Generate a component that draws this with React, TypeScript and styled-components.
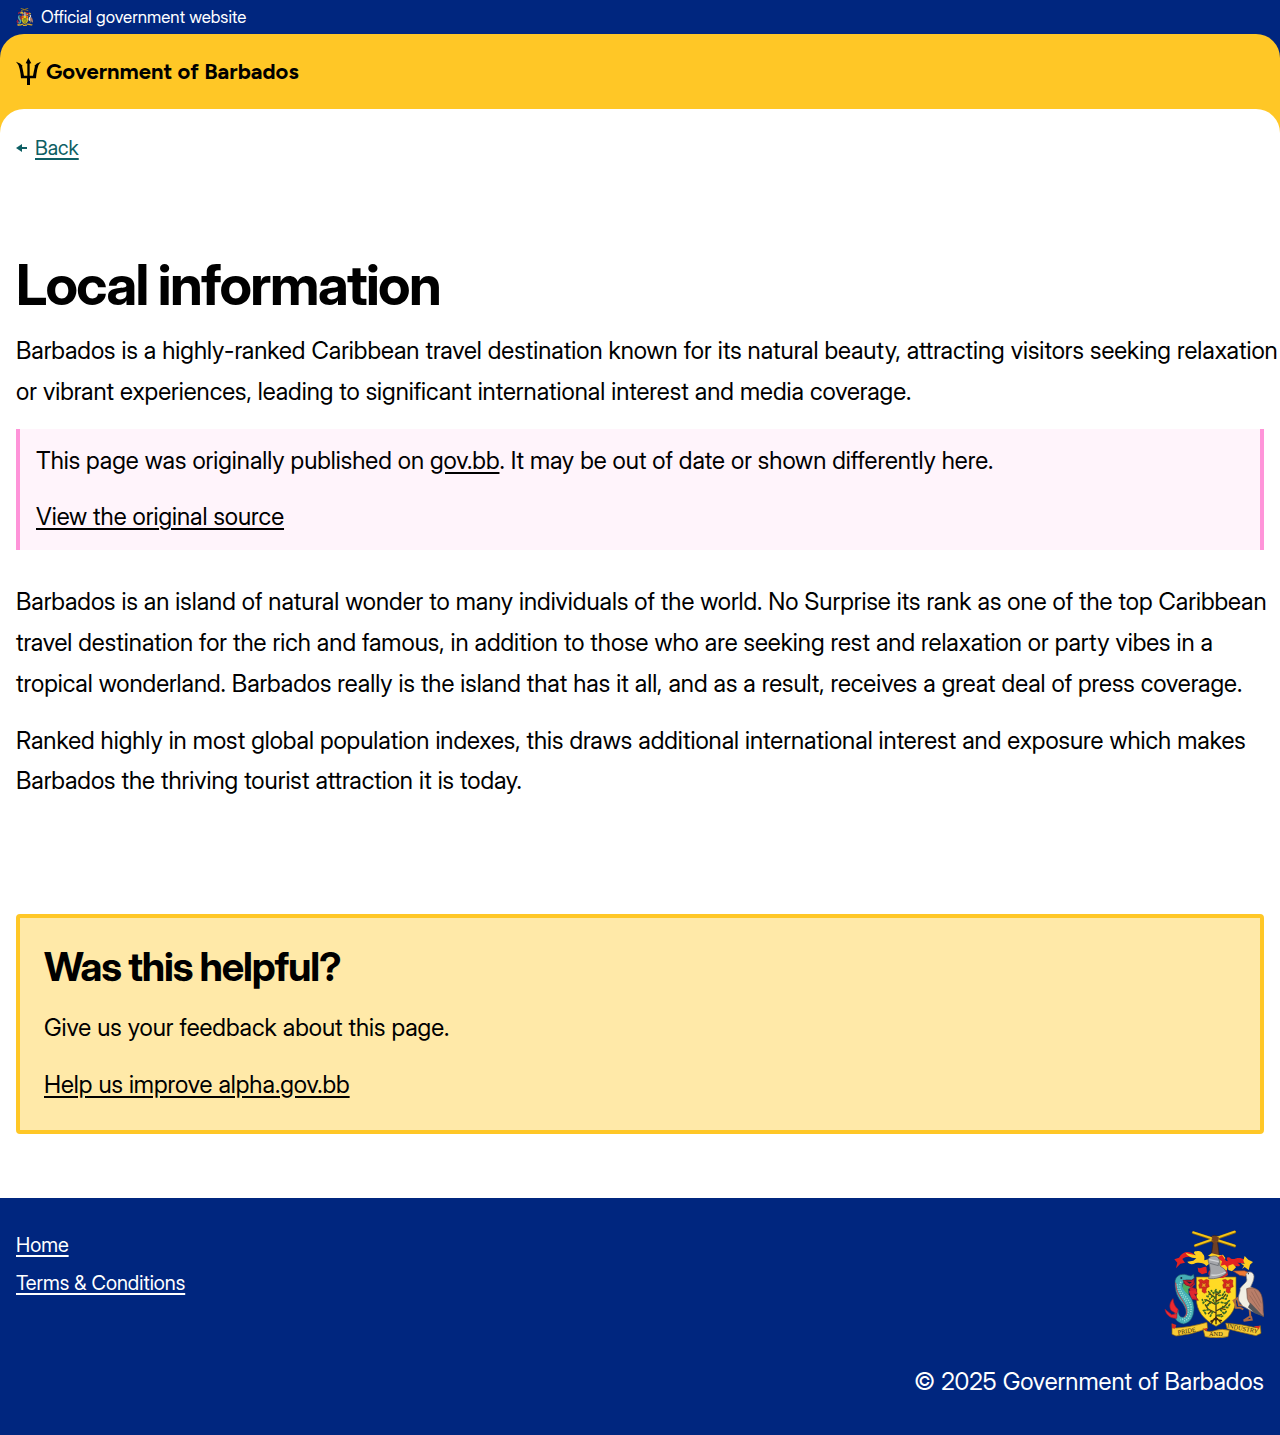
import React from "react";
import styled, { createGlobalStyle } from "styled-components";

const color = {
  blue: "#00267f",
  yellow: "#ffc726",
  paleYellow: "#ffe9a8",
  pink: "#ff94d9",
  palePink: "#fff4fb",
  teal: "#0e5f64",
};

const GlobalStyle = createGlobalStyle`
  *, *::before, *::after { box-sizing: border-box; }
  body {
    margin: 0;
    background: #fff;
    color: #000;
    font-family: "Inter Display", Inter, "Liberation Sans", sans-serif;
    font-size: 24px;
    line-height: 1.7;
  }
  h1, h2, p { margin: 0; }
`;

const OfficialBar = styled.div`
  display: flex;
  align-items: center;
  gap: 8px;
  padding: 4px 16px;
  background: ${color.blue};
  color: #fff;
  font-size: 17px;
  line-height: 26px;
`;

const HeaderBackdrop = styled.div`
  background: ${color.blue};
`;

const Header = styled.header`
  padding: 24px 16px;
  border-radius: 24px 24px 0 0;
  background: ${color.yellow};
`;

const Brand = styled.a`
  display: flex;
  align-items: center;
  gap: 5px;
  width: fit-content;
  color: #000;
  font-family: Figtree, Inter, sans-serif;
  font-size: 22px;
  font-weight: 700;
  line-height: 27px;
  text-decoration: none;
`;

const MainBackdrop = styled.div`
  background: linear-gradient(${color.yellow} 24px, #fff 24px);
`;

const Main = styled.main`
  padding: 24px 16px 64px;
  border-radius: 24px 24px 0 0;
  background: #fff;
`;

const BackLink = styled.a`
  display: flex;
  align-items: center;
  gap: 8px;
  width: fit-content;
  color: ${color.teal};
  font-size: 20px;
  line-height: 30px;
  text-decoration: none;

  span {
    text-decoration: underline;
    text-underline-offset: 3px;
  }
`;

const Article = styled.article`
  display: flex;
  flex-direction: column;
  gap: 16px;
  padding: 92px 0 112px;
`;

const Title = styled.h1`
  font-size: 56px;
  font-weight: 700;
  line-height: 60px;
  letter-spacing: -0.03em;
`;

const Prose = styled.p`
  margin-right: -16px;
`;

const Link = styled.a<{ $small?: boolean }>`
  color: inherit;
  font-size: ${(p) => (p.$small ? "20px" : "inherit")};
  line-height: ${(p) => (p.$small ? "30px" : "inherit")};
  text-underline-offset: 3px;
`;

const Notice = styled.aside`
  display: flex;
  flex-direction: column;
  gap: 16px;
  margin-bottom: 16px;
  padding: 12px 16px;
  border: solid ${color.pink};
  border-width: 0 4px;
  background: ${color.palePink};
`;

const Feedback = styled.section`
  display: flex;
  flex-direction: column;
  gap: 16px;
  padding: 24px;
  border: 4px solid ${color.yellow};
  border-radius: 4px;
  background: ${color.paleYellow};
`;

const Subtitle = styled.h2`
  font-size: 40px;
  font-weight: 700;
  line-height: 50px;
  letter-spacing: -0.03em;
`;

const Footer = styled.footer`
  display: flex;
  justify-content: space-between;
  padding: 32px 16px;
  background: ${color.blue};
  color: #fff;
`;

const FooterNav = styled.nav`
  display: flex;
  flex-direction: column;
  align-items: flex-start;
  gap: 8px;
`;

const Legal = styled.div`
  display: flex;
  flex-direction: column;
  align-items: flex-end;
  gap: 24px;
`;

const Trident = () => (
  <svg width="25" height="27" viewBox="48 174 75 81" aria-hidden="true">
    <path d="M85 174L94 190Q91 189 89 191V227H99Q102 211 105 198L102 199Q109 189 123 185Q115 192 112 207Q109 221 108 235H90V255H81V235H63Q62 221 59 207Q56 192 48 185Q62 189 69 199L66 198Q69 211 72 227H82V191Q80 189 77 190Z" />
  </svg>
);

const BackArrow = () => (
  <svg width="11" height="10" viewBox="0 0 11 10" fill="currentColor" aria-hidden="true">
    <path d="M0 5L6 1V4H11V6H6V9Z" />
  </svg>
);

const Flower = ({ x }: { x: number }) => (
  <g transform={`translate(${x} 178)`} stroke="#8e1c14" strokeWidth="1">
    <path
      fill="#d62a1e"
      d="M0 2L9 0L16 4L24 0L32 3L31 13L33 22L25 26L23 34L25 39L18 42L11 37L12 27L3 27L1 17L5 11Z"
    />
    <path fill="#f0a124" d="M11 10L17 14L23 10L21 19L24 24L16 22L9 24L12 17Z" />
  </g>
);

/* Coat of arms: crossed canes and helm above the shield, dolphin and pelican either side. */
const Crest = ({ width, height }: { width: number; height: number }) => (
  <svg width={width} height={height} viewBox="42 30 300 324" role="img" aria-label="Coat of arms of Barbados">
    <path d="M184 107L189 70L183 63L184 50L192 46L204 48L208 58L203 68L208 107Z" fill="#704025" stroke="#352015" strokeWidth="2" />
    <g strokeLinecap="round">
      <path d="M130 38L254 78M136 77L254 36" stroke="#8a650d" strokeWidth="9" />
      <path d="M130 37L254 77M136 76L254 35" stroke="#f3c51a" strokeWidth="6" />
    </g>
    <path d="M186 51L206 55M185 58L205 62" stroke="#704025" strokeWidth="7" />

    <path d="M134 104C117 90 97 94 87 113L73 118L82 128L78 145L91 131L105 128L97 117C107 108 119 109 131 113Z" fill="#e32222" />
    <path d="M169 138C163 129 151 127 137 129C125 136 116 132 112 125L130 122L139 115C122 113 112 108 107 98C117 103 130 102 138 106C129 100 131 93 140 94C147 91 155 94 158 101C165 107 163 114 163 121L175 118L180 130Z" fill="#ffcf20" />
    <path d="M143 142C150 150 160 138 169 141L171 158L156 163L145 155Z" fill="#e32222" />
    <path d="M174 107L185 100L209 106L219 104L226 114L221 127L233 140L230 155L208 139L202 116Z" fill="#ffcf20" />
    <path d="M200 113L216 105L228 122L234 124C225 113 235 108 243 116C255 120 258 112 265 114C278 113 282 121 296 122L286 130L262 128C275 135 270 142 257 137C254 153 244 152 236 147L225 134L212 137L216 124Z" fill="#e32222" />
    <path d="M280 122L284 108L295 119L309 126L300 134L296 150L284 141L276 147L282 137L272 130L284 131Z" fill="#ffcf20" />
    <path d="M235 137L249 132L258 142L246 154L235 150Z" fill="#ffcf20" />

    <path d="M139 171H258V235C258 274 233 300 198 319C161 299 139 273 139 235Z" fill="#ffda24" stroke="#87671b" strokeWidth="2" />
    <path d="M176 165Q173 156 180 150Q204 158 231 150L234 165L219 174H185Z" fill="#d9282a" />
    <path d="M176 174C186 150 176 132 174 119C177 110 191 105 202 110L209 121L210 138L223 147L230 159C214 174 196 177 176 176Z" fill="#a5a7ab" stroke="#555860" strokeWidth="2" />
    <path d="M178 119L206 125M184 165C199 168 213 163 227 156" fill="none" stroke="#d4d6d9" strokeWidth="4" />
    <path d="M205 129V137L180 130" fill="none" stroke="#74777d" strokeWidth="3" />

    <Flower x={145} />
    <Flower x={217} />

    <path d="M198 302V212M198 279L174 267L165 253M198 273L223 260L234 247M198 254L174 242L163 239M198 245L220 232L228 222M198 235L180 222L175 213M198 226L212 215M198 288L216 283M184 273L174 282M211 265L227 269M182 246L170 257" fill="none" stroke="#493d18" strokeWidth="4" />
    <path d="M198 290Q197 300 181 304M198 292Q199 300 216 302M193 296L184 311M198 294V313M202 296L212 308" fill="none" stroke="#3f2813" strokeWidth="4" />
    <g fill="none" stroke="#3a6b25" strokeWidth="5" strokeLinecap="round" strokeDasharray="5 6">
      <path d="M198 209L191 220L184 212M198 216L207 218L212 209M180 219L174 230L166 226M188 228L179 237M206 226L217 226L224 216M215 234L228 237L232 226M170 240L160 249L157 239M183 247L167 261M214 247L227 250L238 242M218 260L233 263L240 251M176 269L161 272L167 281M188 275L181 289M211 269L223 282L231 271M203 286L214 290L223 286M197 231L189 240L198 253L208 246" />
    </g>

    <path d="M117 198L140 207V225L132 221L145 241L123 238Z" fill="#cf2130" stroke="#69152a" strokeWidth="2" />
    <path d="M94 176L130 178L135 193L122 207L106 202Z" fill="#b82130" />
    <path d="M75 188C74 171 88 161 104 163L123 168L131 163L133 175L125 180L107 180L99 190C90 209 131 222 132 262C133 290 121 309 101 312C82 309 70 295 74 280L85 270C85 286 91 293 101 291C114 283 107 264 97 249C83 233 74 214 75 188Z" fill="#46aeb5" stroke="#184f6d" strokeWidth="2" />
    <path d="M93 186C76 218 121 230 123 260C125 284 115 303 98 303M82 193C79 220 113 235 115 262C117 283 107 298 91 299" fill="none" stroke="#9be0d7" strokeWidth="5" strokeDasharray="3 4" />
    <path d="M77 188C78 216 91 231 100 245C111 262 116 282 102 293" fill="none" stroke="#c83a4a" strokeWidth="3" />
    <path d="M77 280L63 271C56 258 61 245 69 236C70 250 75 260 84 268L81 281ZM81 281L65 284L45 268C48 283 59 296 80 295Z" fill="#ec2931" stroke="#a51d2d" strokeWidth="2" />
    <path d="M99 190Q92 208 116 224L115 207L122 201Z" fill="#4caf65" />
    <path d="M99 181L125 181L133 176L132 190L121 199L107 195Z" fill="#c91e2b" stroke="#68172a" strokeWidth="2" />
    <path d="M108 184L126 186L119 191Z" fill="#19293d" />
    <circle cx="94" cy="174" r="3" fill="#142e43" />
    <path d="M116 214L135 211L144 221L132 221L140 234L124 231" fill="#de2830" />

    <path d="M249 153L283 152L295 157L286 169L269 166Z" fill="#ef7a35" stroke="#8d4428" strokeWidth="2" />
    <path d="M280 268L270 263L258 263L256 251L251 242L262 235L265 246L267 255L286 257M299 268L301 289L281 302L305 299L303 289" fill="none" stroke="#ad6840" strokeWidth="6" />
    <path d="M288 162C295 151 312 155 312 170C312 179 307 190 302 200L325 212L328 239L342 288L304 273L278 258L267 243C262 225 273 215 270 206C278 193 294 186 290 176Z" fill="#f1eee4" stroke="#888078" strokeWidth="2" />
    <path d="M290 206C312 197 332 211 336 231C342 257 338 275 341 290C320 279 297 253 292 235Z" fill="#b97e69" stroke="#6d4a41" strokeWidth="2" />
    <path d="M304 215L330 260M313 210L334 250M299 226L330 272" stroke="#946455" strokeWidth="2" />
    <path d="M301 248L341 290L314 280L294 262Z" fill="#55565a" />
    <circle cx="295" cy="161" r="2" fill="#282828" />

    <g fill="#f7ca35" stroke="#87600e" strokeWidth="2">
      <path d="M66 312L77 324Q118 322 171 307L173 325Q124 345 78 348L66 343Z" />
      <path d="M159 326Q173 340 197 331Q216 325 238 331L234 350Q199 357 165 350Z" />
      <path d="M227 309Q276 313 318 323L331 317L333 340L318 347Q271 337 231 326Z" />
    </g>
    <path d="M65 310L79 315L75 326L66 325ZM160 326L173 325L169 334ZM311 319L330 317L327 328Z" fill="#d82c22" />
    <g fill="#35270e" fontFamily="Liberation Serif, serif" fontSize="19">
      <text transform="translate(84 344) rotate(-10)">PRIDE</text>
      <text x="177" y="348">AND</text>
      <text transform="translate(230 323) rotate(11)">INDUSTRY</text>
    </g>
  </svg>
);

export default function App() {
  return (
    <>
      <GlobalStyle />
      <OfficialBar>
        <Crest width={17} height={18} />
        <span>Official government website</span>
      </OfficialBar>
      <HeaderBackdrop>
        <Header>
          <Brand href="#">
            <Trident />
            Government of Barbados
          </Brand>
        </Header>
      </HeaderBackdrop>
      <MainBackdrop>
        <Main>
          <BackLink href="#">
            <BackArrow />
            <span>Back</span>
          </BackLink>
          <Article>
            <Title>Local information</Title>
            <Prose>
              Barbados is a highly-ranked Caribbean travel destination known for its natural beauty, attracting
              visitors seeking relaxation or vibrant experiences, leading to significant international interest and
              media coverage.
            </Prose>
            <Notice>
              <p>
                This page was originally published on <Link href="#">gov.bb</Link>. It may be out of date or shown
                differently here.
              </p>
              <p>
                <Link href="#">View the original source</Link>
              </p>
            </Notice>
            <Prose>
              Barbados is an island of natural wonder to many individuals of the world. No Surprise its rank as one of
              the top Caribbean travel destination for the rich and famous, in addition to those who are seeking rest
              and relaxation or party vibes in a tropical wonderland. Barbados really is the island that has it all,
              and as a result, receives a great deal of press coverage.
            </Prose>
            <Prose>
              Ranked highly in most global population indexes, this draws additional international interest and
              exposure which makes Barbados the thriving tourist attraction it is today.
            </Prose>
          </Article>
          <Feedback>
            <Subtitle>Was this helpful?</Subtitle>
            <p>Give us your feedback about this page.</p>
            <p>
              <Link href="#">Help us improve alpha.gov.bb</Link>
            </p>
          </Feedback>
        </Main>
      </MainBackdrop>
      <Footer>
        <FooterNav aria-label="Footer">
          <Link $small href="#">
            Home
          </Link>
          <Link $small href="#">
            Terms &amp; Conditions
          </Link>
        </FooterNav>
        <Legal>
          <Crest width={100} height={108} />
          <p>© 2025 Government of Barbados</p>
        </Legal>
      </Footer>
    </>
  );
}
